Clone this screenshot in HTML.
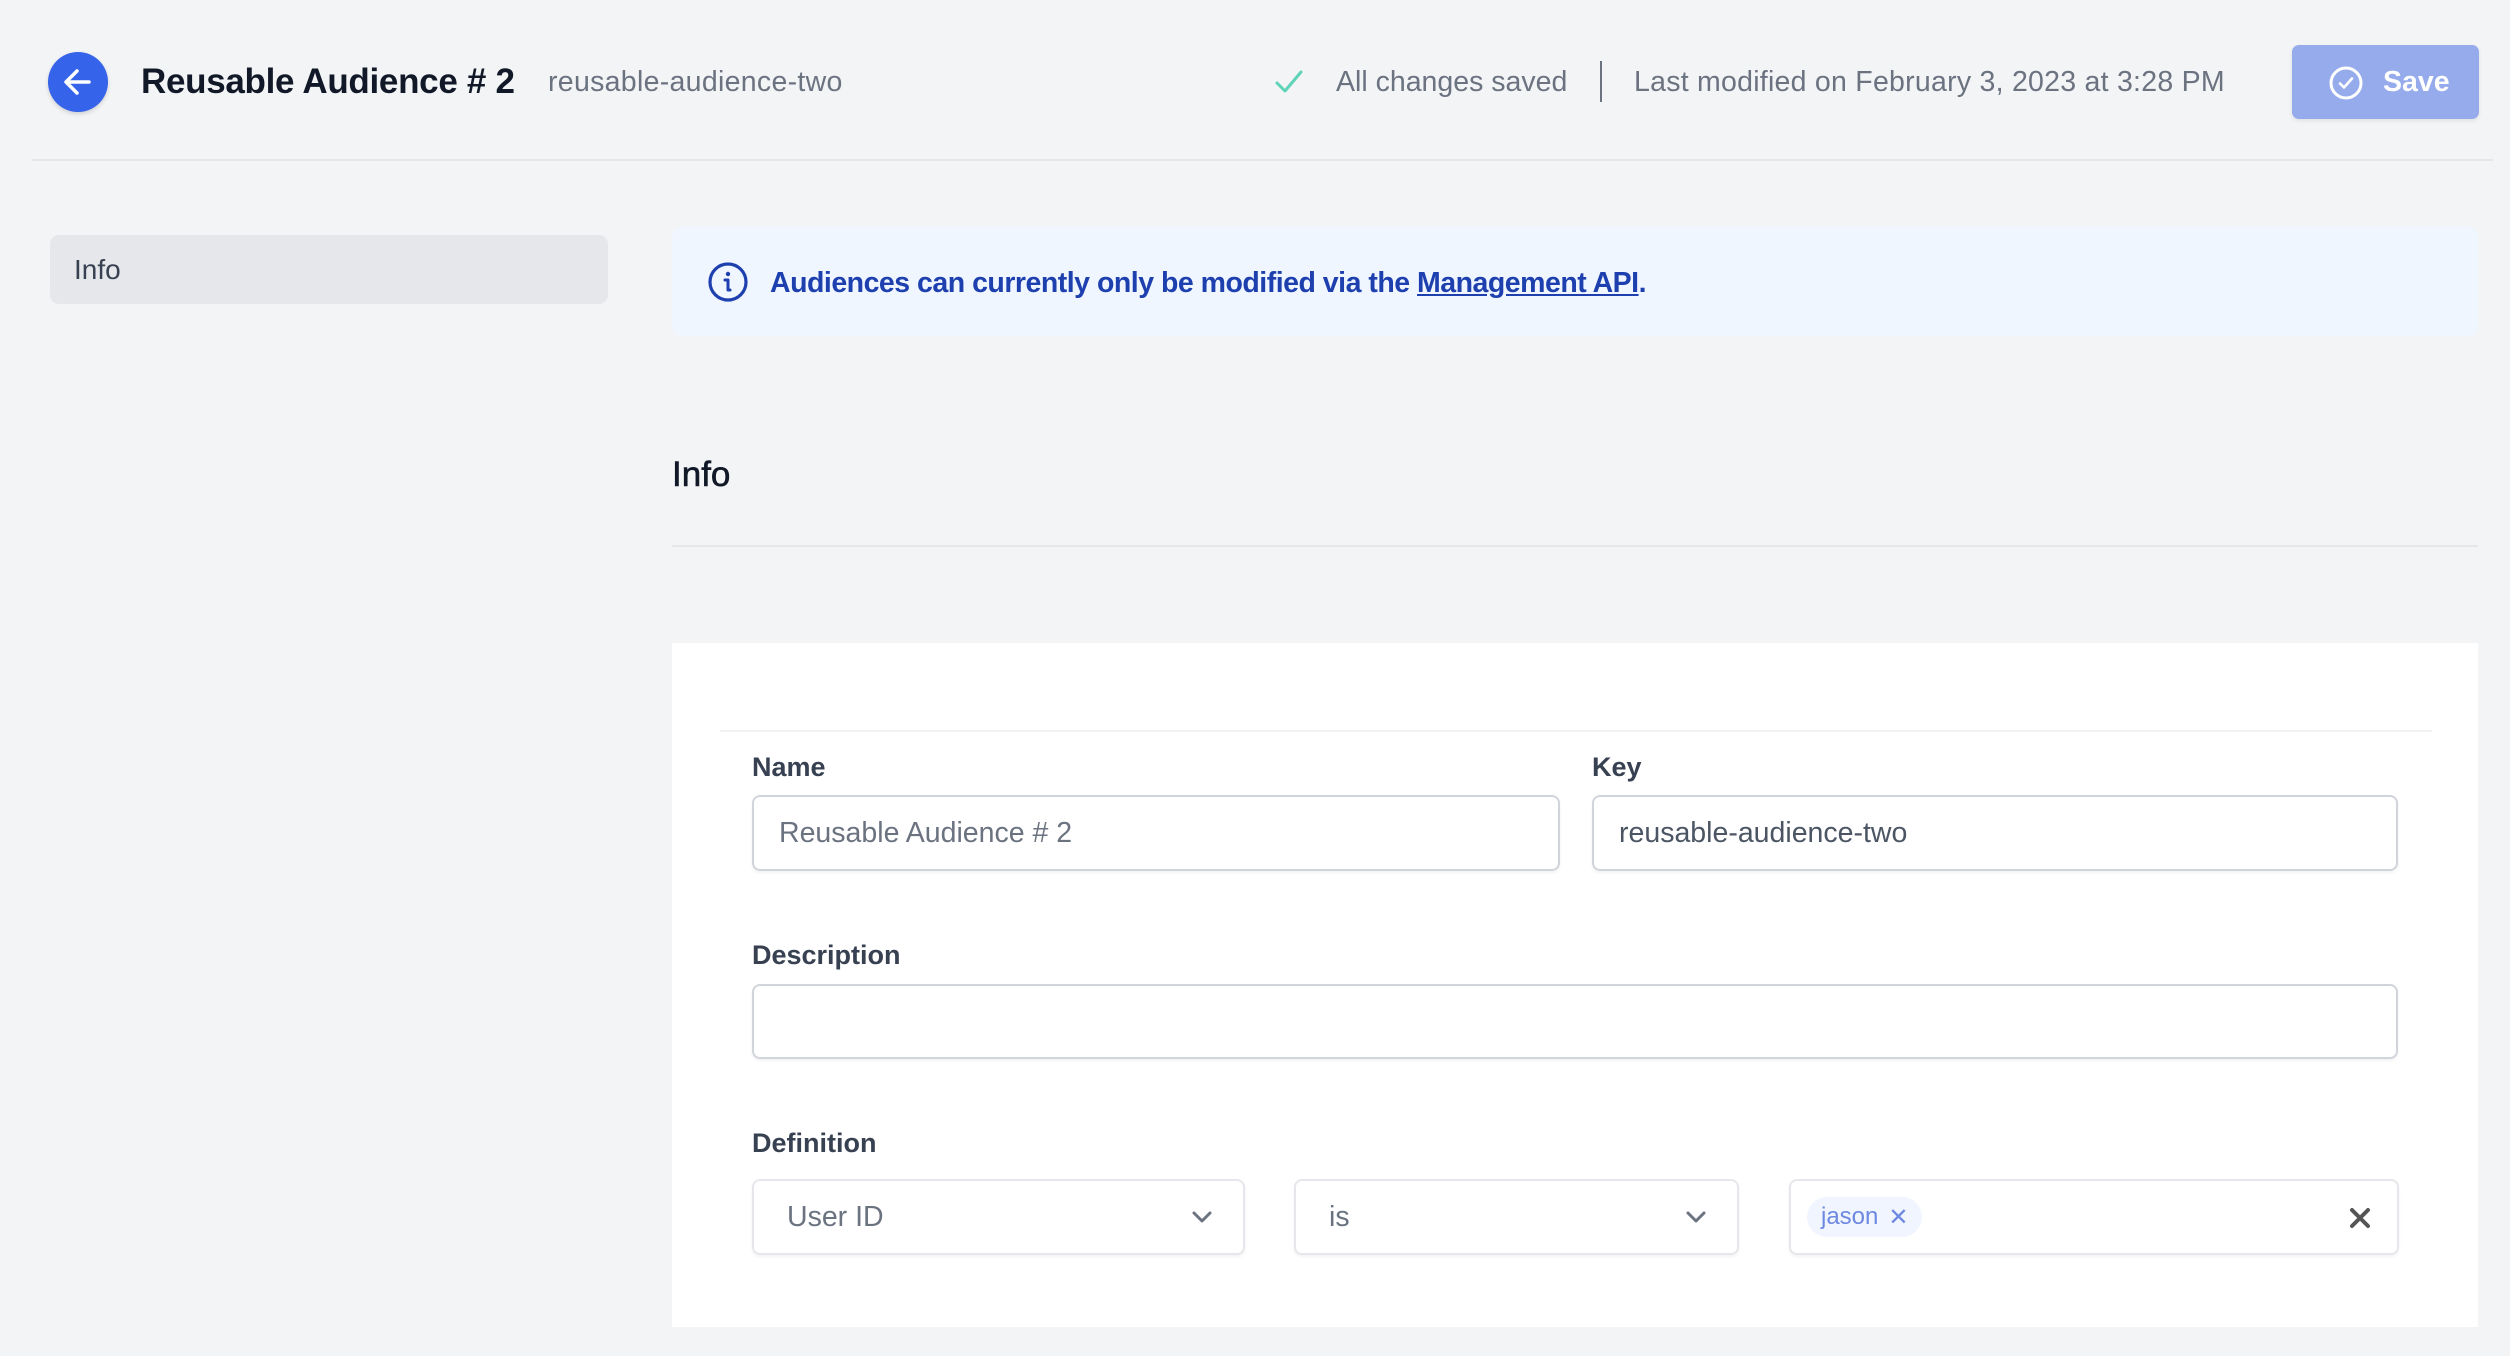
<!DOCTYPE html>
<html><head><meta charset="utf-8"><style>
*{box-sizing:border-box;margin:0;padding:0}
body{width:2510px;height:1356px;background:#f3f4f6;font-family:"Liberation Sans",sans-serif;position:relative;overflow:hidden}
.a{position:absolute;white-space:nowrap}
.lbl{font-size:27px;font-weight:600;color:#374151;line-height:1}
.inp{position:absolute;background:#fff;border:2px solid #d1d5db;border-radius:8px;box-shadow:0 2px 3px rgba(0,0,0,.05);font-size:28.5px;color:#6b7280;display:flex;align-items:center;padding-left:25px}
.sel{border-color:#e5e7eb;color:#6b7280;padding-left:33px}
</style></head><body>
<div class="a" style="left:48px;top:52px;width:60px;height:60px;border-radius:50%;background:#3563e9;box-shadow:0 2px 4px rgba(0,0,0,.15)">
<svg width="60" height="60" viewBox="0 0 60 60"><path d="M41 30H19M29 19L18 30L29 41" stroke="#fff" stroke-width="3.5" fill="none" stroke-linecap="round" stroke-linejoin="round"/></svg></div>
<div class="a" style="left:141px;top:60px;font-size:35px;font-weight:600;color:#111827;line-height:44px;letter-spacing:-0.3px">Reusable Audience # 2</div>
<div class="a" style="left:548px;top:64px;font-size:28.5px;color:#6b7280;line-height:36px;letter-spacing:0.3px">reusable-audience-two</div>
<svg class="a" style="left:1274px;top:68px" width="30" height="28" viewBox="0 0 30 28"><path d="M3 15L11 23L27 4" stroke="#5ed3b7" stroke-width="3" fill="none" stroke-linecap="round" stroke-linejoin="round"/></svg>
<div class="a" style="left:1336px;top:64px;font-size:28.5px;color:#6b7280;line-height:36px">All changes saved</div>
<div class="a" style="left:1600px;top:61px;width:2px;height:41px;background:#6b7280"></div>
<div class="a" style="left:1634px;top:64px;font-size:28.5px;color:#6b7280;line-height:36px;letter-spacing:0.25px">Last modified on February 3, 2023 at 3:28 PM</div>
<div class="a" style="left:2292px;top:45px;width:187px;height:74px;border-radius:7px;background:#95abeb;box-shadow:0 2px 4px rgba(0,0,0,.08)">
<svg class="a" style="left:36px;top:20px" width="36" height="36" viewBox="0 0 36 36"><circle cx="18" cy="18" r="15" stroke="#fff" stroke-width="3" fill="none"/><path d="M12 18.5l4 4l8-9" stroke="#fff" stroke-width="2.6" fill="none" stroke-linecap="round" stroke-linejoin="round"/></svg>
<div class="a" style="left:91px;top:19px;font-size:28.5px;font-weight:600;color:#fff;line-height:36px">Save</div></div>
<div class="a" style="left:32px;top:159px;width:2461px;height:2px;background:#e5e7eb"></div>
<div class="a" style="left:50px;top:235px;width:558px;height:69px;border-radius:9px;background:#e5e7eb"></div>
<div class="a" style="left:74px;top:253px;font-size:28px;color:#374151;line-height:34px">Info</div>
<div class="a" style="left:672px;top:227px;width:1806px;height:109px;border-radius:10px;background:#eff6ff"></div>
<svg class="a" style="left:707px;top:261px" width="42" height="42" viewBox="0 0 42 42"><circle cx="21" cy="21" r="18" stroke="#1e40af" stroke-width="3.2" fill="none"/><circle cx="21" cy="13" r="2.2" fill="#1e40af"/><path d="M18 19h3v10h2" stroke="#1e40af" stroke-width="3" fill="none" stroke-linecap="round" stroke-linejoin="round"/></svg>
<div class="a" style="left:770px;top:265px;font-size:28.5px;font-weight:600;color:#1e40af;line-height:36px;letter-spacing:-0.5px">Audiences can currently only be modified via the <span style="text-decoration:underline">Management API</span>.</div>
<div class="a" style="left:672px;top:454px;font-size:35px;font-weight:500;color:#111827;line-height:42px;-webkit-text-stroke:0.6px #111827">Info</div>
<div class="a" style="left:672px;top:545px;width:1806px;height:2px;background:#e5e7eb"></div>
<div class="a" style="left:672px;top:643px;width:1806px;height:684px;background:#fff"></div>
<div class="a" style="left:720px;top:730px;width:1712px;height:2px;background:#f0f1f3"></div>
<div class="a lbl" style="left:752px;top:754px">Name</div>
<div class="a lbl" style="left:1592px;top:754px">Key</div>
<div class="inp" style="left:752px;top:795px;width:808px;height:76px">Reusable Audience # 2</div>
<div class="inp" style="left:1592px;top:795px;width:806px;height:76px;color:#4b5563">reusable-audience-two</div>
<div class="a lbl" style="left:752px;top:942px">Description</div>
<div class="inp" style="left:752px;top:984px;width:1646px;height:75px"></div>
<div class="a lbl" style="left:752px;top:1130px">Definition</div>
<div class="inp sel" style="left:752px;top:1179px;width:493px;height:76px">User ID
<svg class="a" style="right:30px;top:28px" width="22" height="16" viewBox="0 0 22 16"><path d="M3 4l8 8l8-8" stroke="#6b7280" stroke-width="3" fill="none" stroke-linecap="round" stroke-linejoin="round"/></svg></div>
<div class="inp sel" style="left:1294px;top:1179px;width:445px;height:76px">is
<svg class="a" style="right:30px;top:28px" width="22" height="16" viewBox="0 0 22 16"><path d="M3 4l8 8l8-8" stroke="#6b7280" stroke-width="3" fill="none" stroke-linecap="round" stroke-linejoin="round"/></svg></div>
<div class="inp sel" style="left:1789px;top:1179px;width:610px;height:76px;padding-left:16px">
<div style="background:#f1f5ff;border-radius:20px;height:40px;padding:0 14px 0 14px;display:flex;align-items:center;font-size:24px;color:#6d88e0">jason<span style="margin-left:10px;font-size:24px">✕</span></div>
<svg class="a" style="right:26px;top:26px" width="22" height="22" viewBox="0 0 22 22"><path d="M3 3L19 19M19 3L3 19" stroke="#555" stroke-width="4" stroke-linecap="round"/></svg></div>
</body></html>
